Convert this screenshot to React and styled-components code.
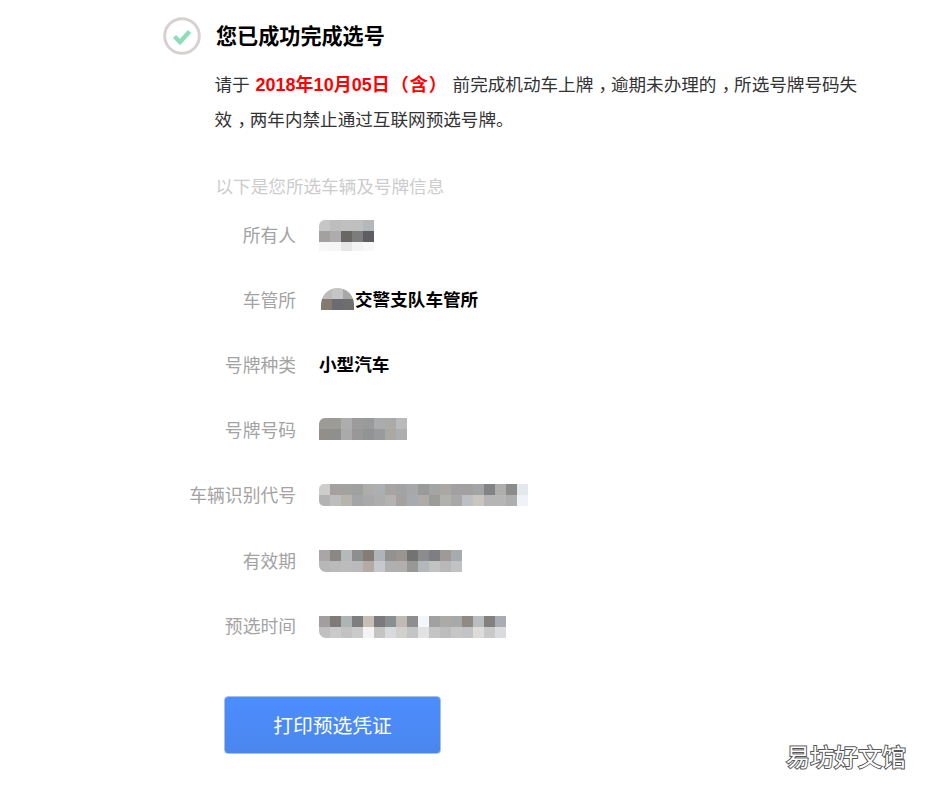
import React from 'react';
import styled, { createGlobalStyle } from 'styled-components';

const GlobalStyle = createGlobalStyle`
  html, body {
    margin: 0;
    padding: 0;
    background: #fff;
    font-family: "Liberation Sans", "Noto Sans CJK SC", sans-serif;
  }
`;

const rows = [
  {
    label: '所有人',
    corners: '6px 0 0 0',
    nudge: 2,
    height: 31,
    cells: [
      ['#c6c6c6', '#bdbdbd', '#c0c0c0', '#bfbfbf', '#b5b8bb'],
      ['#a3a1a0', '#adadad', '#696764', '#7c7c7c', '#5c5e63'],
      ['#f7f7f7', '#f6f6f6', '#e6e6e6', '#f3f3f3', '#f8f8f8'],
    ],
  },
  {
    label: '车管所',
    text: '交警支队车管所',
    corners: '17px 17px 0 0',
    inline: true,
    cells: [
      ['#bcbcbc', '#c5c5c5', '#a7a7a7'],
      ['#857a70', '#6a6c70', '#6e6e6e'],
    ],
  },
  { label: '号牌种类', text: '小型汽车' },
  {
    label: '号牌号码',
    corners: '6px 0 0 0',
    cells: [
      ['#9d9b98', '#9c9b98', '#adadad', '#9d9b9b', '#999a9a', '#abacae', '#acaaa8', '#b9babc'],
      ['#928f8a', '#8f8f8d', '#aaaaaa', '#999797', '#919395', '#999a9b', '#a9a8a4', '#adaeb0'],
    ],
  },
  {
    label: '车辆识别代号',
    corners: '5px 0 0 5px',
    nudge: 1,
    cells: [
      ['#cdcdcb', '#a5a1a0', '#a2a29f', '#9fa1a1', '#adadaa', '#acb0b2', '#a8a4a3', '#a1a3a5', '#a6a8a9', '#999a9a', '#a3a4a4', '#aba8a4', '#a2a0a0', '#a2a0a0', '#a3a4a5', '#828385', '#aeaeac', '#8c8c8c', '#e4e8ec'],
      ['#b3b3b3', '#bdbdbd', '#b7b4ae', '#a4a5a6', '#a9a9a9', '#adadad', '#b3b3b1', '#a4a1a0', '#a5abae', '#aeaba8', '#9c9c99', '#b1b1b0', '#a8a8a8', '#bcbfc4', '#c9c6c0', '#b5b5b5', '#b5b5b5', '#adaeaf', '#eff2f6'],
    ],
  },
  {
    label: '有效期',
    corners: '0 0 0 7px',
    nudge: 1,
    cells: [
      ['#a8a6a6', '#8b8785', '#b5b9ba', '#8d8f8e', '#837d76', '#b0b4ba', '#929290', '#9a9590', '#737372', '#8c8c8e', '#7e7f82', '#9d9a98', '#a8abad'],
      ['#b7b7b7', '#bababa', '#bcbcbc', '#bababa', '#b3aca6', '#c6c8cc', '#b0b0b0', '#b1afae', '#989896', '#b4b8bb', '#c1c3c2', '#b8b8b8', '#c1c2c3'],
    ],
  },
  {
    label: '预选时间',
    corners: '0 0 0 7px',
    nudge: 2,
    cells: [
      ['#a09e9e', '#7f7b79', '#aeb3b3', '#7f7e7e', '#c6bfb8', '#7b7b7d', '#8b8f92', '#bfbab4', '#8f8d8d', '#f1f7fa', '#a1a1a1', '#aaaaa7', '#a8a9a9', '#8f8a83', '#b9bdc0', '#828180', '#a9adb3'],
      ['#c0c0c0', '#cacaca', '#c2c2c2', '#cacaca', '#f5f4f2', '#c4c4c4', '#d8dade', '#d2d0cd', '#c5c4c4', '#e2e2e2', '#c4c4c4', '#bdbdbd', '#c6c6c6', '#c2c3c4', '#dedcda', '#c8c8c8', '#dadbdd'],
    ],
  },
];

const CheckBadge = () => (
  <BadgeSvg viewBox="0 0 40 40">
    <circle cx="20" cy="20" r="17.3" fill="none" stroke="#d9d1d1" strokeWidth="3" />
    <path d="M12.5 20.5 L18 26 L27.5 15.5" fill="none" stroke="#8fdcb8" strokeWidth="4.4" />
  </BadgeSvg>
);

const Mosaic = ({ row }) => (
  <MosaicGrid
    $columns={row.cells[0].length}
    $corners={row.corners}
    $height={row.height || row.cells.length * 11}
    $nudge={row.nudge || 0}
    $inline={row.inline}
  >
    {row.cells.flat().map((color, i) => (
      <MosaicCell key={i} style={{ background: color }} />
    ))}
  </MosaicGrid>
);

const App = () => (
  <Page>
    <GlobalStyle />
    <Header>
      <CheckBadge />
      <Title>您已成功完成选号</Title>
    </Header>
    <Notice>
      请于 <Deadline>2018年10月05日<Paren>（</Paren>含<Paren>）</Paren></Deadline> 前完成机动车上牌<Comma>，</Comma>逾期未办理的<Comma>，</Comma>所选号牌号码失效<Comma>，</Comma>两年内禁止通过互联网预选号牌。
    </Notice>
    <Subhead>以下是您所选车辆及号牌信息</Subhead>
    <InfoList>
      {rows.map((row) => (
        <InfoRow key={row.label}>
          <Label>{row.label}</Label>
          <Value>
            {row.cells && <Mosaic row={row} />}
            {row.text}
          </Value>
        </InfoRow>
      ))}
    </InfoList>
    <PrintButton>打印预选凭证</PrintButton>
    <Watermark>易坊好文馆</Watermark>
  </Page>
);

const Page = styled.div`
  position: relative;
  box-sizing: border-box;
  width: 933px;
  height: 790px;
  padding: 16px 0 0 163px;
  overflow: hidden;
`;

const Header = styled.div`
  display: flex;
  align-items: center;
  gap: 14px;
`;

const BadgeSvg = styled.svg`
  width: 40px;
  height: 40px;
  margin-left: -1px;
`;

const Title = styled.h1`
  margin: 2px 0 0;
  font-size: 21.1px;
  font-weight: 700;
  line-height: 38px;
  color: #000;
`;

const Notice = styled.p`
  width: 644px;
  margin: 12px 0 0 51.5px;
  font-size: 17.6px;
  line-height: 35px;
  color: #333;
`;

const Deadline = styled.strong`
  margin-left: 1px;
  color: #f00;
  font-weight: 700;
  font-size: 18px;
`;

const Paren = styled.span`
  display: inline-block;
  width: 1em;
  text-align: center;
  margin: 0 1px;
`;

const Comma = styled.span`
  font-feature-settings: "halt";
  padding: 0 0.2em 0 0.3em;
`;

const Subhead = styled.div`
  margin: 35px 0 0 52.5px;
  font-size: 17.6px;
  line-height: 28px;
  color: #ccc;
`;

const InfoList = styled.div`
  display: flex;
  flex-direction: column;
`;

const InfoRow = styled.div`
  display: flex;
  align-items: center;
  gap: 23px;
  height: 65.2px;
`;

const Label = styled.div`
  width: 133px;
  font-size: 17.8px;
  text-align: right;
  color: #a3a3a3;
`;

const Value = styled.div`
  display: flex;
  align-items: center;
  font-size: 17.6px;
  font-weight: 700;
  color: #000;
`;

const MosaicGrid = styled.div`
  display: grid;
  grid-template-columns: repeat(${(p) => p.$columns}, 11px);
  grid-auto-rows: 11px;
  height: ${(p) => p.$height}px;
  margin: ${(p) => p.$nudge * 2}px ${(p) => (p.$inline ? 1 : 0)}px 0 ${(p) => (p.$inline ? 2 : 0)}px;
  border-radius: ${(p) => p.$corners};
  overflow: hidden;
`;

const MosaicCell = styled.div``;

const PrintButton = styled.button`
  display: block;
  box-sizing: border-box;
  width: 217px;
  height: 58px;
  margin: 39px 0 0 61px;
  padding: 0 0 2px;
  border: 1px solid #a9bfe6;
  border-radius: 4px;
  background: linear-gradient(#4c8dfe, #4a86ed);
  color: #fff;
  font-family: inherit;
  font-size: 19.8px;
  cursor: pointer;
`;

const Watermark = styled.div`
  position: absolute;
  left: 786px;
  top: 742px;
  font-size: 24px;
  line-height: 32px;
  color: #fff;
  -webkit-text-stroke: 2px #555;
  paint-order: stroke fill;
`;

export default App;
